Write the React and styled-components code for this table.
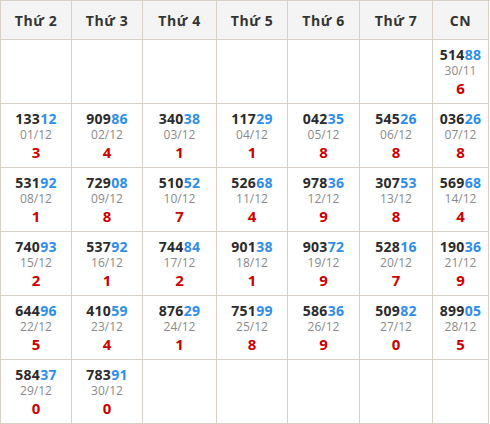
import React from 'react';
import styled, { createGlobalStyle } from 'styled-components';

const GlobalStyle = createGlobalStyle`
	body {
		margin: 0;
		background: #fff;
		font-family: "Open Sans", "Liberation Sans", sans-serif;
	}
`

const COL_WIDTHS = '71px 71px 74px 71px 72px 73px 56px';

const Table = styled.div`
	display: grid;
	grid-template-columns: ${COL_WIDTHS};
	width: 489px;
	border-left: 1px solid #d8d1ca;
	border-top: 1px solid #d8d1ca;
`

const HeadCell = styled.div`
	height: 39px;
	box-sizing: border-box;
	border-right: 1px solid #d8d1ca;
	border-bottom: 1px solid #d8d1ca;
	background: #f4f4f4;
	display: flex;
	align-items: center;
	justify-content: center;
	font-weight: 700;
	font-size: 14px;
	letter-spacing: 0.6px;
	color: #333;
	padding-top: 1px;
`

const Cell = styled.div`
	height: 64px;
	box-sizing: border-box;
	border-right: 1px solid #d8d1ca;
	border-bottom: 1px solid #d8d1ca;
	display: flex;
	flex-direction: column;
	align-items: center;
	justify-content: center;
	padding-bottom: 1px;
`

const Number = styled.div`
	font-size: 14px;
	font-weight: 700;
	line-height: 17px;
	color: #2b2b2b;
	letter-spacing: 0.3px;
`

const Tail = styled.span`
	color: #2e8ee8;
`

const DateText = styled.div`
	font-size: 12px;
	line-height: 16px;
	color: #8a8a8a;
	font-weight: 400;
`

const Digit = styled.div`
	font-size: 15px;
	font-weight: 700;
	line-height: 18px;
	color: #cc0000;
`

const headers = ['Thứ 2', 'Thứ 3', 'Thứ 4', 'Thứ 5', 'Thứ 6', 'Thứ 7', 'CN'];

//Each entry: [number, date, digit], null for an empty cell

const weeks = [
	[null, null, null, null, null, null, ['51488', '30/11', '6']],
	[['13312', '01/12', '3'], ['90986', '02/12', '4'], ['34038', '03/12', '1'], ['11729', '04/12', '1'], ['04235', '05/12', '8'], ['54526', '06/12', '8'], ['03626', '07/12', '8']],
	[['53192', '08/12', '1'], ['72908', '09/12', '8'], ['51052', '10/12', '7'], ['52668', '11/12', '4'], ['97836', '12/12', '9'], ['30753', '13/12', '8'], ['56968', '14/12', '4']],
	[['74093', '15/12', '2'], ['53792', '16/12', '1'], ['74484', '17/12', '2'], ['90138', '18/12', '1'], ['90372', '19/12', '9'], ['52816', '20/12', '7'], ['19036', '21/12', '9']],
	[['64496', '22/12', '5'], ['41059', '23/12', '4'], ['87629', '24/12', '1'], ['75199', '25/12', '8'], ['58636', '26/12', '9'], ['50982', '27/12', '0'], ['89905', '28/12', '5']],
	[['58437', '29/12', '0'], ['78391', '30/12', '0'], null, null, null, null, null]
];

function DayCell({ data }) {
	if (!data) return <Cell />;
	let [num, date, digit] = data;
	return (
		<Cell>
			<Number>{num.slice(0, 3)}<Tail>{num.slice(3)}</Tail></Number>
			<DateText>{date}</DateText>
			<Digit>{digit}</Digit>
		</Cell>
	);
}

export default function App() {
	return (
		<>
			<GlobalStyle />
			<Table>
				{headers.map(h => <HeadCell key={h}>{h}</HeadCell>)}
				{weeks.map((week, w) =>
					week.map((d, i) => <DayCell key={w + '-' + i} data={d} />)
				)}
			</Table>
		</>
	);
}
